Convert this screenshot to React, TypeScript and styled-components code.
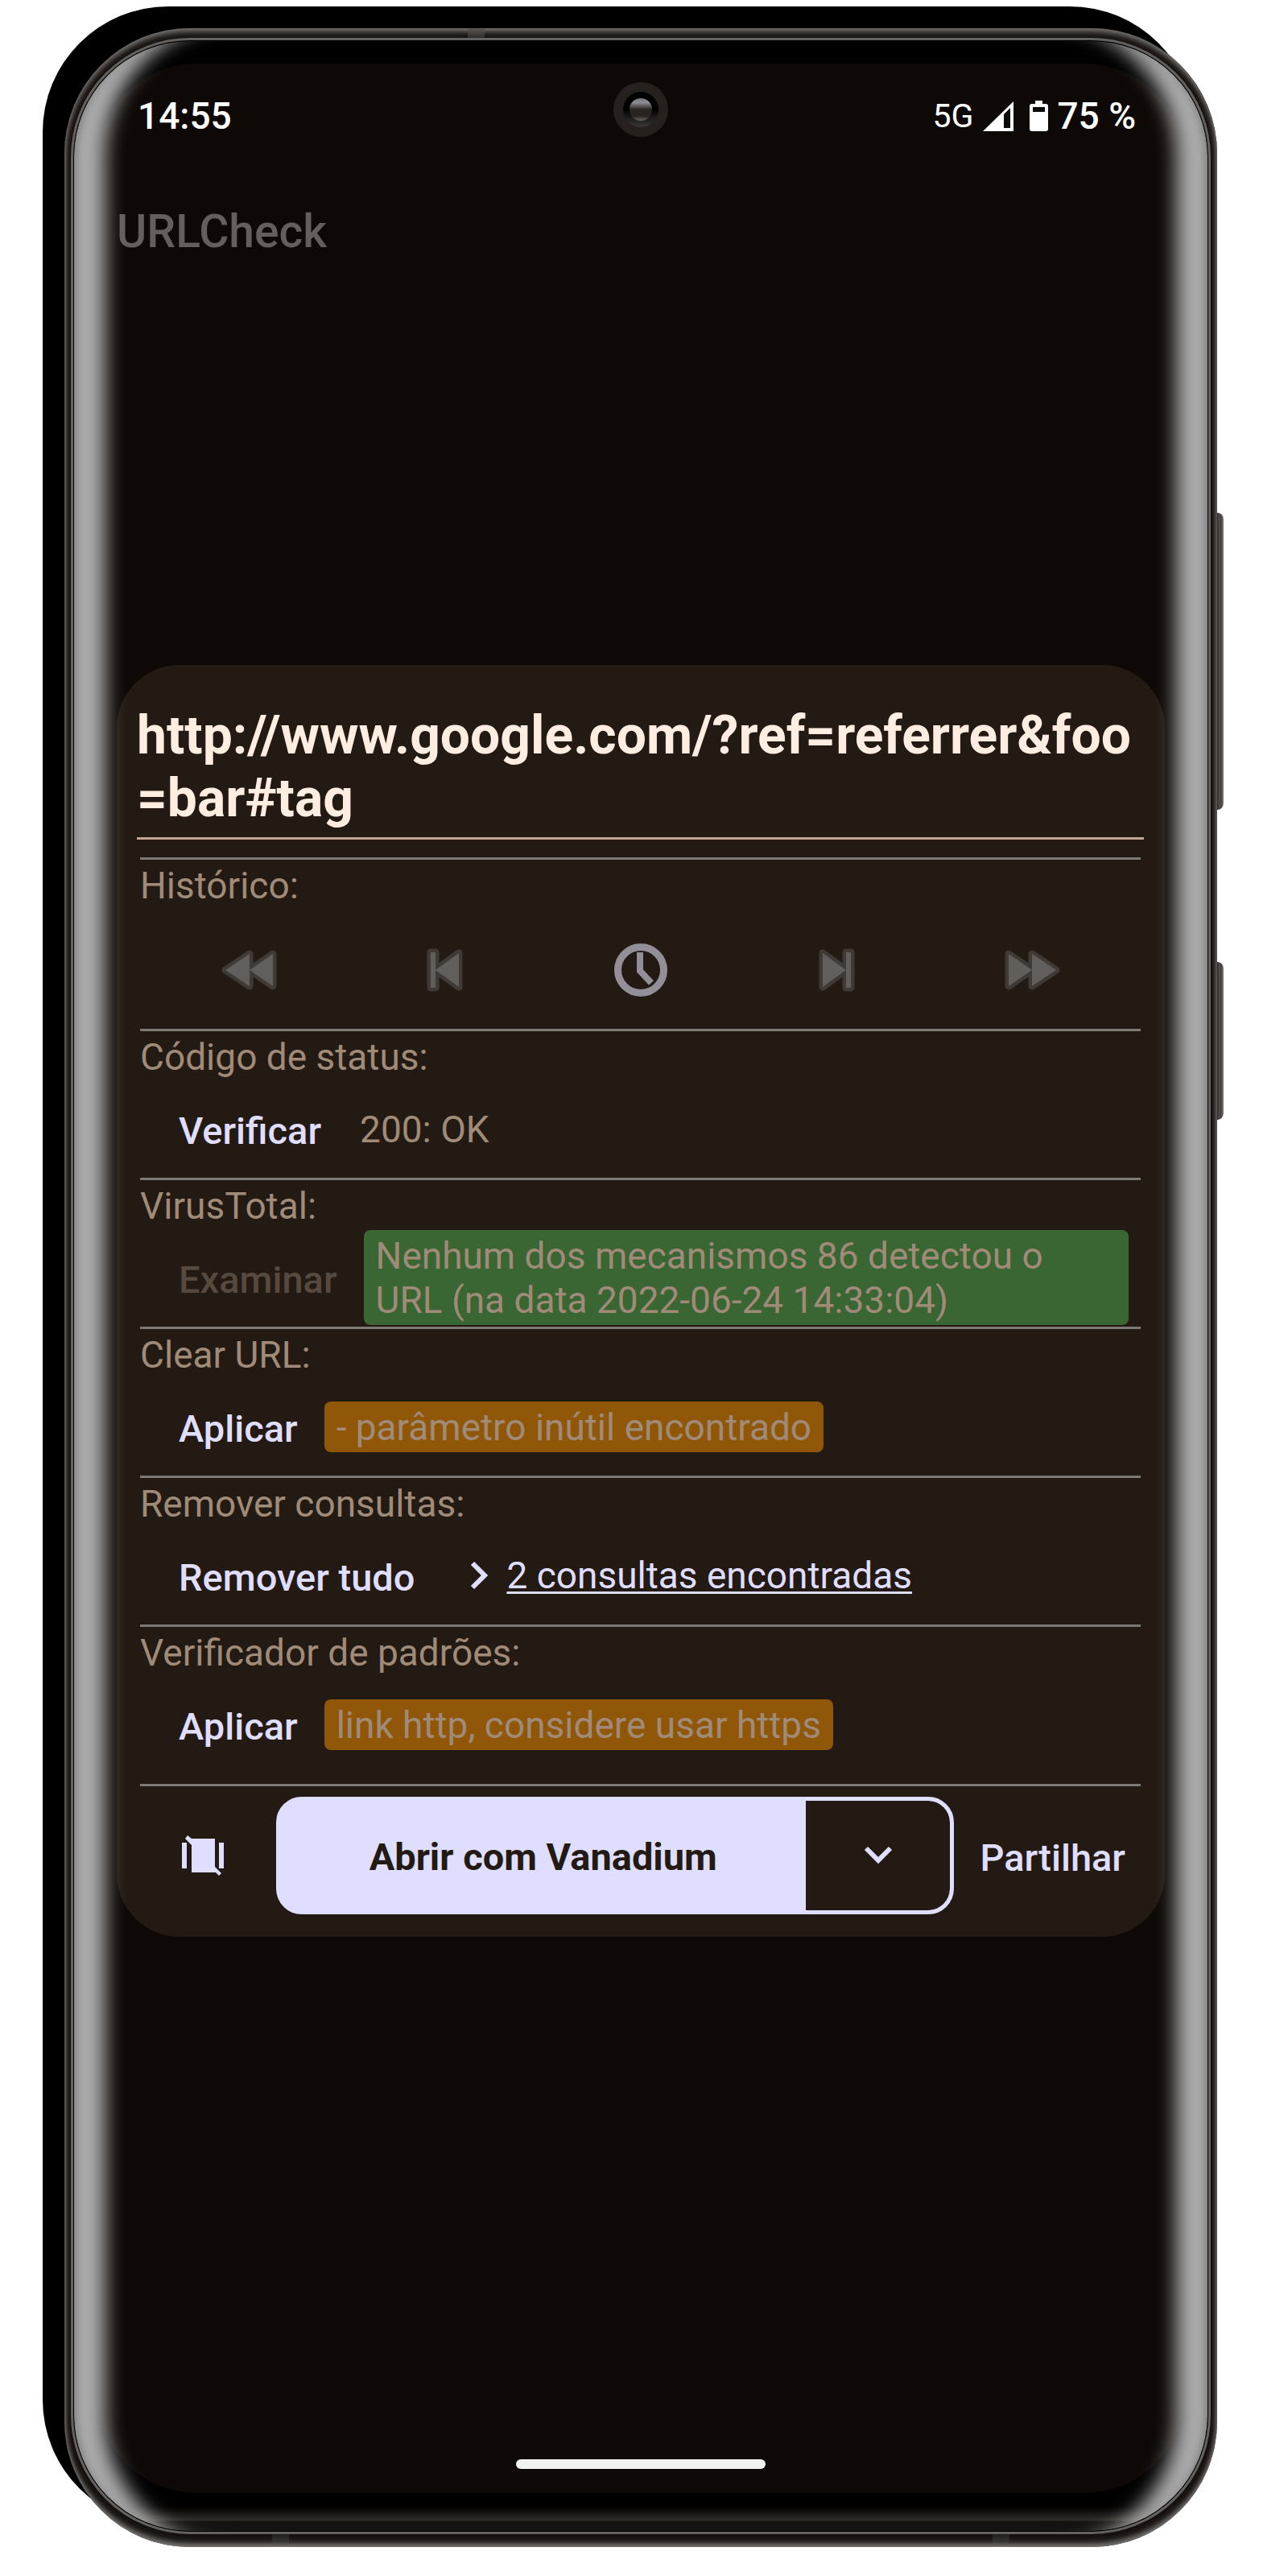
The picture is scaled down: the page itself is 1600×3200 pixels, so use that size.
import React from "react";
import styled, { createGlobalStyle } from "styled-components";

const color = {
  screen: "#0e0906",
  card: "#231a13",
  muted: "#a08a78",
  accent: "#e0deff",
  rule: "#7b7a77",
  url: "#ffede2",
};

const GlobalStyle = createGlobalStyle`
  * { box-sizing: border-box; }
  body { margin: 0; background: #fff; }
  button, textarea { font: inherit; color: inherit; margin: 0; }
`;

const Page = styled.div`
  min-height: 100vh;
  display: flex;
  padding: 35px 88px 36px 80px;
  overflow: hidden;
  font-family: Roboto, "Liberation Sans", sans-serif;
  font-size: 46px;
  line-height: 55px;
`;

const Frame = styled.div`
  position: relative;
  flex: 1;
  display: flex;
  padding: 12px 8px 16px;
  border-radius: 156px;
  background: #17120f;
  box-shadow:
    inset 0 0 6px 1px #777573,
    inset 0 -8px 9px -4px #777573,
    inset 0 6px 8px -2px #686563,
    -27px -27px 0 #000;
`;

const Rim = styled.div`
  flex: 1;
  display: flex;
  border: 3px solid #636261;
  border-radius: 148px;
  background: #000;
  padding: 1px;
`;

const Bezel = styled.div`
  position: relative;
  flex: 1;
  display: flex;
  border-radius: 144px;
  overflow: hidden;
  padding: 28px 28px 47px;
  background: linear-gradient(to top, #141311 12px, #322c27 13px, #000 30px);
`;

const Glass = styled.div`
  position: absolute;
  inset: 0;
  border-radius: 144px;
  pointer-events: none;
  box-shadow:
    inset 17px 0 12px -14px rgba(110, 110, 110, 0.8),
    inset -17px 0 12px -14px rgba(110, 110, 110, 0.8),
    inset 64px 0 23px -25px #acacac,
    inset -64px 0 23px -25px #acacac;
`;

const HardwareKey = styled.span<{ $top: number; $height: number }>`
  position: absolute;
  left: 100%;
  top: ${(p) => p.$top}px;
  width: 8px;
  height: ${(p) => p.$height}px;
  border-radius: 0 8px 8px 0;
  background: linear-gradient(to right, #2b2827, #565452 40%, #3d3a39 60%, #8a8887);
`;

const Antenna = styled.span<{ $edge: "top" | "bottom"; $left: string }>`
  position: absolute;
  ${(p) => p.$edge}: 0;
  left: ${(p) => p.$left};
  width: 21px;
  height: ${(p) => (p.$edge === "top" ? 12 : 16)}px;
  background: ${(p) =>
    p.$edge === "top"
      ? "linear-gradient(#5c5957, #2e2a28)"
      : "linear-gradient(#211d1b, #3a3634 60%, #777573)"};
`;

const Screen = styled.main`
  position: relative;
  flex: 1;
  min-width: 0;
  display: flex;
  flex-direction: column;
  padding: 38px 25px 30px;
  border-radius: 125px;
  background: ${color.screen};
`;

const StatusBar = styled.header`
  display: flex;
  justify-content: space-between;
  padding: 0 36px 0 26px;
  line-height: 54px;
  font-weight: 500;
  color: #fff;
`;

const StatusIcons = styled.div`
  display: flex;
  align-items: center;
`;

const Network = styled.span`
  font-size: 41px;
  line-height: 46px;
  font-weight: 400;
  margin-right: 12px;
`;

const Camera = styled.svg`
  position: absolute;
  top: 23px;
  left: 50%;
  width: 68px;
  height: 68px;
  margin-left: -34px;
`;

const AppTitle = styled.h1`
  margin: 83px 0 0;
  font-size: 57px;
  line-height: 68px;
  font-weight: 500;
  color: #645f5d;
`;

const Spacer = styled.div<{ $grow: number }>`
  flex-grow: ${(p) => p.$grow};
`;

const Dialog = styled.section`
  padding: 49px 26px 28px 25px;
  border-radius: 78px;
  background: ${color.card};
  color: ${color.muted};
`;

const UrlInput = styled.textarea`
  display: block;
  width: 100%;
  height: 168px;
  margin-bottom: 22px;
  padding: 0;
  border: 0;
  border-bottom: 3px solid #c3a590;
  outline: 0;
  resize: none;
  overflow: hidden;
  background: transparent;
  color: ${color.url};
  font-size: 66px;
  line-height: 78px;
  font-weight: 700;
  word-break: break-all;
`;

const Module = styled.section<{ $extra?: number }>`
  margin: 0 4px;
  padding: 5px 0 ${(p) => p.$extra || 0}px;
  border-top: 3px solid ${color.rule};
`;

const ModuleTitle = styled.h2`
  margin: 0;
  font-size: 46px;
  line-height: 55px;
  font-weight: 400;
`;

const ModuleRow = styled.div`
  display: flex;
  align-items: center;
  min-height: 122px;
  padding: 0 15px 0 48px;
  gap: 33px;
`;

const TextButton = styled.button`
  flex: none;
  padding: 4px 0 0;
  border: 0;
  background: none;
  color: ${color.accent};
  font-size: 47px;
  font-weight: 500;
  white-space: nowrap;
  cursor: pointer;
  &:disabled {
    color: #57493e;
    cursor: default;
  }
`;

const chipColors = { plain: "transparent", good: "#396632", warn: "#905708" };

const Result = styled.span<{ $tone: keyof typeof chipColors }>`
  padding: 5px 15px 3px;
  border-radius: 8px;
  background: ${(p) => chipColors[p.$tone]};
`;

const QueriesLink = styled.a`
  display: flex;
  align-items: center;
  gap: 21px;
  margin-left: 36px;
  color: ${color.accent};
  text-decoration-thickness: 3px;
  text-underline-offset: 4px;
`;

const HistoryRow = styled.div`
  display: grid;
  grid-template-columns: repeat(5, 1fr);
  height: 150px;
  padding: 3px 14px 0;
`;

const IconButton = styled.button`
  display: flex;
  align-items: center;
  justify-content: center;
  padding: 0;
  border: 0;
  background: none;
  color: ${color.accent};
  cursor: pointer;
`;

const Actions = styled.footer`
  display: flex;
  align-items: center;
  margin: 0 4px;
  padding: 13px 19px 0 52px;
  border-top: 3px solid ${color.rule};
`;

const SplitButton = styled.div`
  flex: 1;
  display: flex;
  height: 146px;
  margin: 0 32px 0 65px;
  border: 5px solid ${color.accent};
  border-radius: 32px;
  background: ${color.accent};
  overflow: hidden;
`;

const OpenButton = styled.button`
  flex: 1;
  padding: 3px 0 0;
  border: 0;
  background: ${color.accent};
  color: ${color.card};
  font-size: 47px;
  font-weight: 700;
  cursor: pointer;
`;

const MoreButton = styled(IconButton)`
  width: 179px;
  border-radius: 0 26px 26px 0;
  background: ${color.card};
`;

const HomeBar = styled.div`
  align-self: center;
  width: 310px;
  height: 12px;
  border-radius: 6px;
  background: #f2f1f0;
`;

const shape = {
  fill: "#625e5c",
  stroke: "#403a36",
  strokeWidth: 9,
  strokeLinejoin: "round" as const,
  paintOrder: "stroke",
};

const FastIcon = ({ back }: { back?: boolean }) => (
  <svg width="70" height="70" viewBox="0 0 70 70" aria-hidden="true">
    <g {...shape} transform={back ? "matrix(-1 0 0 1 70 0)" : undefined}>
      <path d="M6 15 L35 35 L6 55Z M35 15 L65 35 L35 55Z" />
    </g>
  </svg>
);

const StepIcon = ({ back }: { back?: boolean }) => (
  <svg width="70" height="70" viewBox="0 0 70 70" aria-hidden="true">
    <g {...shape} transform={back ? "matrix(-1 0 0 1 70 0)" : undefined}>
      <path d="M18 14 L47 35 L18 56Z M47 13 H53 V57 H47Z" />
    </g>
  </svg>
);

const ClockIcon = () => (
  <svg width="70" height="70" viewBox="0 0 70 70" fill="none" stroke="#938f99" aria-hidden="true">
    <circle cx="35" cy="35" r="28.5" strokeWidth="9" />
    <path d="M34 13 V36 L48 51" strokeWidth="8" />
  </svg>
);

const NoVibrateIcon = () => (
  <svg width="52" height="52" viewBox="0 0 52 52" fill={color.accent} aria-hidden="true">
    <path d="M12 5 H41 V40 L49 48 L46 51 L42 47 H12 V13 L4 5 L7 1Z" />
    <path d="M0 10 H6 V42 H0Z M46 10 H52 V42 H46Z" />
  </svg>
);

const Chevron = ({ down }: { down?: boolean }) => (
  <svg
    width={down ? 36 : 24}
    height={down ? 24 : 36}
    viewBox={down ? "0 0 36 24" : "0 0 24 36"}
    fill="none"
    stroke={color.accent}
    strokeWidth="6"
    aria-hidden="true"
  >
    <path d={down ? "M3 3 L18 18 L33 3" : "M3 3 L18 18 L3 33"} />
  </svg>
);

const SignalIcon = () => (
  <svg width="38" height="38" viewBox="0 0 38 38" aria-hidden="true">
    <path fillRule="evenodd" fill="#fff" d="M0 38 L38 1 V38Z M26 17 V34 H34 V9Z" />
  </svg>
);

const BatteryIcon = () => (
  <svg width="54" height="38" viewBox="0 0 54 38" aria-hidden="true">
    <path
      fillRule="evenodd"
      fill="#fff"
      d="M27 0 H36 V4 H40 Q43 4 43 7 V35 Q43 38 40 38 H23 Q20 38 20 35 V7 Q20 4 23 4 H27Z M24 8 V14 H39 V8Z"
    />
  </svg>
);

const FrontCamera = () => (
  <Camera viewBox="0 0 68 68" aria-hidden="true">
    <defs>
      <linearGradient id="ring" x2="0" y2="1">
        <stop offset="0.5" stopColor="#000" />
        <stop offset="1" stopColor="#3c3937" />
      </linearGradient>
      <linearGradient id="lens" x2="0" y2="1">
        <stop offset="0" stopColor="#77757d" />
        <stop offset="0.2" stopColor="#8d8b93" />
        <stop offset="0.5" stopColor="#292421" />
        <stop offset="0.8" stopColor="#292421" />
        <stop offset="1" stopColor="#6b6967" />
      </linearGradient>
    </defs>
    <circle cx="34" cy="34" r="34" fill="#26211d" />
    <circle cx="34" cy="34" r="22" fill="url(#ring)" />
    <circle cx="34" cy="34" r="14" fill="url(#lens)" />
  </Camera>
);

export default function App() {
  return (
    <>
      <GlobalStyle />
      <Page>
        <Frame>
          <HardwareKey $top={602} $height={369} />
          <HardwareKey $top={1160} $height={196} />
          <Antenna $edge="top" $left="35%" />
          <Antenna $edge="bottom" $left="18%" />
          <Antenna $edge="bottom" $left="80.5%" />
          <Rim>
            <Bezel>
              <Screen>
                <FrontCamera />
                <StatusBar>
                  <span>14:55</span>
                  <StatusIcons>
                    <Network>5G</Network>
                    <SignalIcon />
                    <BatteryIcon />
                    <span>75 %</span>
                  </StatusIcons>
                </StatusBar>
                <AppTitle>URLCheck</AppTitle>
                <Spacer $grow={7} />
                <Dialog>
                  <UrlInput
                    aria-label="URL"
                    rows={2}
                    spellCheck={false}
                    defaultValue="http://www.google.com/?ref=referrer&foo=bar#tag"
                  />
                  <Module>
                    <ModuleTitle>Histórico:</ModuleTitle>
                    <HistoryRow>
                      <IconButton aria-label="Primeiro"><FastIcon back /></IconButton>
                      <IconButton aria-label="Anterior"><StepIcon back /></IconButton>
                      <IconButton aria-label="Lista"><ClockIcon /></IconButton>
                      <IconButton aria-label="Seguinte"><StepIcon /></IconButton>
                      <IconButton aria-label="Último"><FastIcon /></IconButton>
                    </HistoryRow>
                  </Module>
                  <Module>
                    <ModuleTitle>Código de status:</ModuleTitle>
                    <ModuleRow>
                      <TextButton>Verificar</TextButton>
                      <Result $tone="plain">200: OK</Result>
                    </ModuleRow>
                  </Module>
                  <Module>
                    <ModuleTitle>VirusTotal:</ModuleTitle>
                    <ModuleRow>
                      <TextButton disabled>Examinar</TextButton>
                      <Result $tone="good">
                        Nenhum dos mecanismos 86 detectou o URL (na data 2022-06-24 14:33:04)
                      </Result>
                    </ModuleRow>
                  </Module>
                  <Module>
                    <ModuleTitle>Clear URL:</ModuleTitle>
                    <ModuleRow>
                      <TextButton>Aplicar</TextButton>
                      <Result $tone="warn">- parâmetro inútil encontrado</Result>
                    </ModuleRow>
                  </Module>
                  <Module>
                    <ModuleTitle>Remover consultas:</ModuleTitle>
                    <ModuleRow>
                      <TextButton>Remover tudo</TextButton>
                      <QueriesLink href="#consultas">
                        <Chevron />
                        <span>2 consultas encontradas</span>
                      </QueriesLink>
                    </ModuleRow>
                  </Module>
                  <Module $extra={13}>
                    <ModuleTitle>Verificador de padrões:</ModuleTitle>
                    <ModuleRow>
                      <TextButton>Aplicar</TextButton>
                      <Result $tone="warn">link http, considere usar https</Result>
                    </ModuleRow>
                  </Module>
                  <Actions>
                    <IconButton aria-label="Não vibrar"><NoVibrateIcon /></IconButton>
                    <SplitButton>
                      <OpenButton>Abrir com Vanadium</OpenButton>
                      <MoreButton aria-label="Mais aplicações"><Chevron down /></MoreButton>
                    </SplitButton>
                    <TextButton>Partilhar</TextButton>
                  </Actions>
                </Dialog>
                <Spacer $grow={9} />
                <HomeBar />
              </Screen>
              <Glass />
            </Bezel>
          </Rim>
        </Frame>
      </Page>
    </>
  );
}
